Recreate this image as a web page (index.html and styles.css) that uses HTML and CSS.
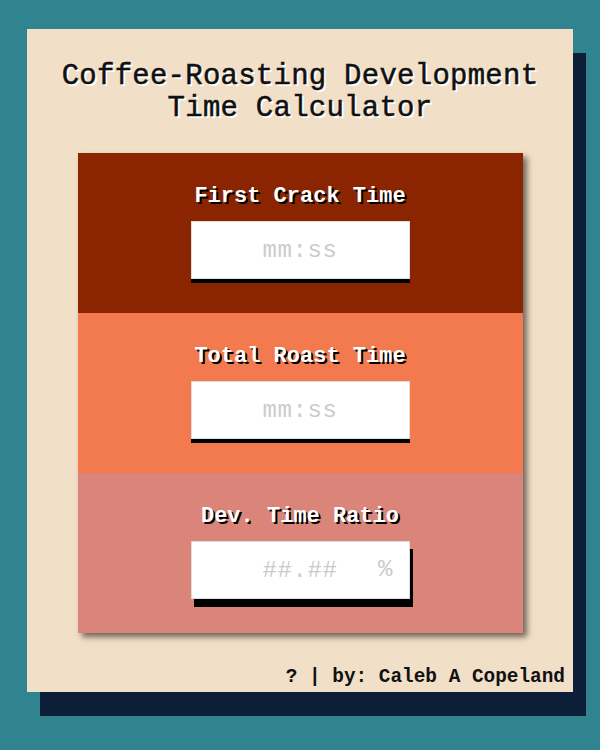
FILE: index.html
```html
<!DOCTYPE html>
<html lang="en">
<head>
<meta charset="utf-8">
<title>Coffee-Roasting Development Time Calculator</title>
<link rel="stylesheet" href="styles.css">
</head>
<body>
<main class="card">
  <h1 class="title">Coffee-Roasting Development<br>Time Calculator</h1>
  <section class="panel">
    <div class="row row-first">
      <label class="label" for="fc">First Crack Time</label>
      <input class="field field-flat" id="fc" type="text" placeholder="mm:ss">
    </div>
    <div class="row row-total">
      <label class="label" for="tr">Total Roast Time</label>
      <input class="field field-flat" id="tr" type="text" placeholder="mm:ss">
    </div>
    <div class="row row-dev">
      <label class="label" for="dr">Dev. Time Ratio</label>
      <div class="field-wrap">
        <input class="field field-raised" id="dr" type="text" placeholder="##.##" readonly>
        <span class="unit">%</span>
      </div>
    </div>
  </section>
  <footer class="footer">? | by: Caleb A Copeland</footer>
</main>
</body>
</html>
```
FILE: styles.css
```css
html, body {
  margin: 0;
  padding: 0;
}
body {
  background: #2f848f;
  height: 750px;
  overflow: hidden;
  font-family: "Liberation Mono", "Courier New", monospace;
}
.card {
  box-sizing: border-box;
  width: 546px;
  height: 663px;
  margin: 29px 0 0 27px;
  background: #f2dfc8;
  box-shadow: 13px 24px 0 #0d1f38;
  display: flex;
  flex-direction: column;
  align-items: center;
  padding-top: 32px;
}
.title {
  margin: 0;
  font-size: 29px;
  line-height: 32px;
  letter-spacing: 0.25px;
  font-weight: normal;
  text-align: center;
  color: #111;
  -webkit-text-stroke: 0.5px #111;
  text-shadow: 2px 2px 0 #fff;
}
.panel {
  width: 445px;
  margin-top: 28px;
  display: flex;
  flex-direction: column;
  box-shadow: 4px 4px 6px rgba(0, 0, 0, 0.55);
}
.row {
  height: 160px;
  box-sizing: border-box;
  padding-top: 31px;
  display: flex;
  flex-direction: column;
  align-items: center;
}
.row-first { background: #8b2501; }
.row-total { background: #f37a4e; }
.row-dev { background: #db857a; }
.label {
  font-size: 22px;
  line-height: 26px;
  font-weight: bold;
  color: #fff;
  text-shadow: 2px 2px 0 #000;
  margin-bottom: 11px;
}
.field {
  box-sizing: border-box;
  width: 219px;
  height: 58px;
  border: 1px solid #ddd;
  background: #fff;
  font-family: "Liberation Mono", "Courier New", monospace;
  font-size: 24px;
  letter-spacing: 0.6px;
  text-align: center;
  color: #333;
  outline: none;
  padding: 0;
  margin: 0;
}
.field::placeholder {
  color: #cbcbcb;
}
.field-flat {
  box-shadow: 0 4px 0 #000;
}
.field-wrap {
  position: relative;
  width: 219px;
  height: 58px;
}
.field-raised {
  box-shadow: 3px 8px 0 #000;
}
.unit {
  position: absolute;
  right: 17px;
  top: 16px;
  font-size: 24px;
  line-height: 26px;
  color: #cbcbcb;
}
.footer {
  align-self: flex-end;
  margin-top: auto;
  margin-bottom: 3px;
  padding-right: 8px;
  font-size: 19.4px;
  line-height: 24px;
  font-weight: bold;
  color: #111;
}
```
